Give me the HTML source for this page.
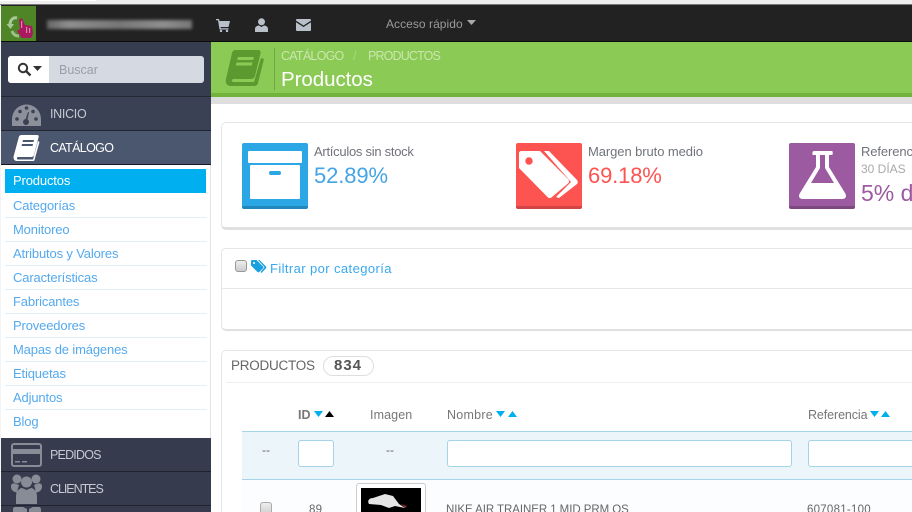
<!DOCTYPE html>
<html lang="es"><head><meta charset="utf-8"><title>Productos</title>
<style>
html,body{margin:0;padding:0;width:912px;height:512px;overflow:hidden;background:#fff}
body{position:relative;font-family:"Liberation Sans",sans-serif;color:#666}
.a{position:absolute;box-sizing:border-box}
.t{position:absolute;white-space:nowrap;line-height:1}
.sub{position:absolute;left:13px;font-size:13px;letter-spacing:-.15px;color:#55a9ee;white-space:nowrap;line-height:1}
.ln{position:absolute;left:5px;width:202px;height:1px;background:#dff0f9}
.m{position:absolute;left:50px;font-size:12.500px;color:#c5c9d2;white-space:nowrap;line-height:1}
svg{position:absolute;display:block}
</style></head><body>
<!-- chrome top -->
<div class="a" style="left:0;top:0;width:912px;height:5px;background:#eeeeee"></div>
<div class="a" style="left:0;top:0;width:96px;height:1px;background:#fff"></div>
<div class="a" style="left:0;top:4px;width:912px;height:2px;background:#777"></div>
<div class="a" style="left:0;top:5px;width:912px;height:36px;background:#222"></div>
<div class="a" style="left:0;top:41px;width:912px;height:1px;background:#0b0b0b"></div>
<div class="a" style="left:0;top:5px;width:1px;height:507px;background:#f4f4f4"></div>
<!-- logo -->
<div class="a" style="left:1px;top:6px;width:35px;height:35px;background:#4f8527"></div>
<svg style="left:5px;top:12px" width="29" height="27" viewBox="0 0 29 27"><path d="M12 6C8 5 5 8 5 13" fill="none" stroke="#a9c896" stroke-width="3"/><path d="M1.500 12L5.500 17 9 12Z" fill="#a9c896"/><path d="M7 19C8 22 10 24 14 24" fill="none" stroke="#9dbf88" stroke-width="3"/><path d="M14 8L17 6 20 13 27 14 28 22 26 26H17L12 19 15 17Z" fill="#a8195e"/><path d="M16 9h1.200v7H16zM21 15h1.200v6H21zM24 16h1.200v5H24z" fill="#d884b0"/></svg>
<!-- blurred name -->
<div class="a" style="left:47px;top:20px;width:145px;height:9px;background:linear-gradient(90deg,#666,#8f8f8f 15%,#777 50%,#8f8f8f 80%,#777);filter:blur(1.500px)"></div>
<!-- top icons -->
<svg style="left:216px;top:19px" width="14" height="13" viewBox="0 0 14 13"><path d="M0 0h3l.5 2H14l-1.500 6H4.500l.3 1.200H12.500v1.300H3.500L2 1.300H0Z" fill="#b9c0c9"/><circle cx="5" cy="12" r="1.200" fill="#b9c0c9"/><circle cx="11" cy="12" r="1.200" fill="#b9c0c9"/></svg>
<svg style="left:255px;top:18px" width="13" height="14" viewBox="0 0 13 14"><circle cx="6.500" cy="3.800" r="3.500" fill="#b9c0c9"/><path d="M0 14V11C0 8.500 2.500 7.500 4 7.500L6.500 9 9 7.500C10.500 7.500 13 8.500 13 11V14Z" fill="#b9c0c9"/></svg>
<svg style="left:296px;top:19px" width="15" height="12" viewBox="0 0 15 12"><path d="M1 0h13a1 1 0 0 1 1 1v.6L7.500 6.500 0 1.600V1a1 1 0 0 1 1-1Z" fill="#b9c0c9"/><path d="M0 3.200 7.500 8 15 3.200V11a1 1 0 0 1-1 1H1a1 1 0 0 1-1-1Z" fill="#b9c0c9"/></svg>
<div class="t" style="left:386px;top:18px;font-size:12px;letter-spacing:.05px;color:#9a9a9a">Acceso rápido</div>
<svg style="left:467px;top:20px" width="9" height="5" viewBox="0 0 9 5"><path d="M0 0h9L4.500 5Z" fill="#aaa"/></svg>
<!-- sidebar -->
<div class="a" style="left:1px;top:42px;width:210px;height:55px;background:#363d4f;border-bottom:1px solid #232834"></div>
<div class="a" style="left:8px;top:56px;width:196px;height:27px;background:#d5dae2;border-radius:3px"></div>
<div class="a" style="left:8px;top:56px;width:41px;height:27px;background:#fff;border-radius:3px 0 0 3px"></div>
<svg style="left:17px;top:62px" width="15" height="15" viewBox="0 0 15 15"><circle cx="6" cy="6" r="4.200" fill="none" stroke="#333" stroke-width="2"/><path d="M9 9l4.500 4.500" stroke="#333" stroke-width="2.300"/></svg>
<svg style="left:33px;top:66px" width="9" height="5" viewBox="0 0 9 5"><path d="M0 0h9L4.500 5Z" fill="#333"/></svg>
<div class="t" style="left:59px;top:64px;font-size:12.500px;letter-spacing:0;color:#9a9ea6">Buscar</div>

<div class="a" style="left:1px;top:97px;width:210px;height:34px;background:#3a4154;border-bottom:1px solid #1f2430"></div>
<svg style="left:12px;top:104px" width="29" height="22" viewBox="0 0 29 22"><path d="M0 22V15A14.500 14.500 0 0 1 29 15V22Z" fill="#8c909a"/><g fill="#3a4154"><circle cx="5" cy="15" r="1.800"/><circle cx="8" cy="7.500" r="1.800"/><circle cx="14.500" cy="4" r="1.800"/><circle cx="21" cy="7.500" r="1.800"/><circle cx="24" cy="15" r="1.800"/><circle cx="14" cy="18" r="3"/><path d="M13 17l3-9 1 .5-2 9Z"/></g></svg>
<div class="m" style="top:108px;letter-spacing:-.3px">INICIO</div>

<div class="a" style="left:1px;top:131px;width:210px;height:34px;background:#4b566f;border-bottom:1px solid #15181f"></div>
<svg style="left:13px;top:135px" width="27" height="26" viewBox="0 0 27 26"><path d="M6 1.500C6.500 .5 7.500 0 8.500 0H24C25.500 0 26 1 25.500 2.500L21 20C20.500 21.500 19.500 22 18 22H5C3.500 22 3.500 24.500 5 24.500H20L25 6 26.500 7 21.500 25C21.300 25.700 20.800 26 20 26H4C1.500 26 0 24 .7 21Z" fill="#fff"/><path d="M10 5h11l-.5 2H9.500ZM9 9h11l-.5 2h-11Z" fill="#4b566f"/></svg>
<div class="m" style="top:142px;color:#fff;letter-spacing:-.65px">CATÁLOGO</div>

<div class="a" style="left:1px;top:165px;width:210px;height:273px;background:#fff;border-right:1px solid #e3e3e3"></div>
<div class="a" style="left:5px;top:169px;width:201px;height:24px;background:#00aff0"></div>
<div class="sub" style="top:174px;color:#fff">Productos</div>
<div class="sub" style="top:199px">Categorías</div><div class="ln" style="top:217px"></div>
<div class="sub" style="top:223px">Monitoreo</div><div class="ln" style="top:241px"></div>
<div class="sub" style="top:247px">Atributos y Valores</div><div class="ln" style="top:265px"></div>
<div class="sub" style="top:271px">Características</div><div class="ln" style="top:289px"></div>
<div class="sub" style="top:295px">Fabricantes</div><div class="ln" style="top:313px"></div>
<div class="sub" style="top:319px">Proveedores</div><div class="ln" style="top:337px"></div>
<div class="sub" style="top:343px">Mapas de imágenes</div><div class="ln" style="top:361px"></div>
<div class="sub" style="top:367px">Etiquetas</div><div class="ln" style="top:385px"></div>
<div class="sub" style="top:391px">Adjuntos</div><div class="ln" style="top:409px"></div>
<div class="sub" style="top:415px">Blog</div>

<div class="a" style="left:1px;top:438px;width:210px;height:34px;background:#363c4e;border-bottom:1px solid #1f2430"></div>
<svg style="left:11px;top:443px" width="31" height="24" viewBox="0 0 31 24"><rect x="1" y="1" width="29" height="22" rx="2" fill="none" stroke="#888c96" stroke-width="2"/><rect x="1" y="6" width="29" height="5" fill="#888c96"/><path d="M4 18h5v1.500H4zM11 18h5v1.500h-5z" fill="#888c96"/></svg>
<div class="m" style="top:449px;letter-spacing:-.8px">PEDIDOS</div>

<div class="a" style="left:1px;top:472px;width:210px;height:34px;background:#363c4e;border-bottom:1px solid #1f2430"></div>
<svg style="left:11px;top:474px" width="31" height="30" viewBox="0 0 31 30"><g fill="#888c96"><circle cx="6" cy="5" r="4.500"/><circle cx="25" cy="5" r="4.500"/><circle cx="15.500" cy="8" r="5.500"/><path d="M0 12C0 10 2 9 4 9.500L8 11C7 14 6 17 7 19L4 18C1 17 0 15 0 12ZM31 12C31 10 29 9 27 9.500L23 11C24 14 25 17 24 19L27 18C30 17 31 15 31 12Z"/><path d="M5 30V22C5 17 9 14 11 14L15.500 16 20 14C22 14 26 17 26 22V30Z"/></g></svg>
<div class="m" style="top:483px;letter-spacing:-1.050px">CLIENTES</div>
<div class="a" style="left:1px;top:506px;width:210px;height:6px;background:#363c4e"></div>
<svg style="left:13px;top:507px" width="28" height="5" viewBox="0 0 28 5"><path d="M0 5V2C0 1 1 0 2 0H10L14 2V5ZM16 5V2L20 0H26C27 0 28 1 28 2V5Z" fill="#888c96"/></svg>

<!-- green header -->
<div class="a" style="left:211px;top:42px;width:701px;height:52px;background:#8bca55"></div>
<div class="a" style="left:211px;top:93px;width:701px;height:4px;background:#72b33c"></div>
<div class="a" style="left:211px;top:97px;width:701px;height:7px;background:#dedede"></div>
<svg style="left:225px;top:50px" width="40" height="36" viewBox="0 0 40 36"><path d="M7 3C7.500 1 9 0 11 0H33C35 0 36 1.500 35.500 3.500L30 26C29.500 27.500 28 29 26 29H9C6 29 6 32 9 32H29L36 8 39 9 33 33C32.500 35 31 36 29 36H6C2 36 0 33 1 29Z" fill="#5c9a2f"/><path d="M13 7H29L28 10H12ZM11.500 12.500H27.500L26.700 15.500H10.700Z" fill="#8bca55"/></svg>
<div class="a" style="left:274px;top:48px;width:1px;height:42px;background:#6fa743"></div>
<div class="t" style="left:281px;top:50px;font-size:12.500px;letter-spacing:-.75px;color:#cbe6ae">CATÁLOGO</div>
<div class="t" style="left:353px;top:50px;font-size:12.500px;color:#a9d77f">/</div>
<div class="t" style="left:368px;top:50px;font-size:12.500px;letter-spacing:-.85px;color:#cbe6ae">PRODUCTOS</div>
<div class="t" style="left:281px;top:70px;font-size:20.500px;letter-spacing:-.05px;color:#fff">Productos</div>

<!-- KPI panel -->
<div class="a" style="left:221px;top:122px;width:720px;height:108px;background:#fff;border:1px solid #e6e6e6;border-bottom:3px solid #e0e0e0;border-radius:5px"></div>
<div class="a" style="left:242px;top:143px;width:66px;height:66px;background:#2aa7e4;border-bottom:3px solid #2088bb;border-radius:2px"></div>
<div class="a" style="left:248px;top:151px;width:54px;height:12px;background:#fff;border-radius:1px"></div>
<div class="a" style="left:250px;top:165px;width:50px;height:34px;background:#fff;border-radius:1px"></div>
<div class="a" style="left:269px;top:171px;width:12px;height:4px;background:#2aa7e4;border-radius:2px"></div>
<div class="t" style="left:314px;top:145px;font-size:13px;letter-spacing:-.27px;color:#707479">Artículos sin stock</div>
<div class="t" style="left:314px;top:165px;font-size:22px;letter-spacing:-.1px;color:#44a4e5">52.89%</div>

<div class="a" style="left:516px;top:143px;width:66px;height:66px;background:#fd5351;border-bottom:3px solid #d44444;border-radius:2px"></div>
<svg style="left:516px;top:143px" width="66" height="63" viewBox="0 0 66 63"><path d="M5 8H24L52 36C53.500 37.500 53.500 39 52 40.500L36 54C34.500 55.500 33 55.500 31.500 54L3 25V10C3 9 4 8 5 8Z" fill="#fff"/><path d="M28 8H33L61 37C62 38.500 62 40 61 41L43 55 40 54 55 39Z" fill="#fff"/><circle cx="13" cy="18" r="3.700" fill="#fd5351"/></svg>
<div class="t" style="left:588px;top:145px;font-size:13px;letter-spacing:-.08px;color:#707479">Margen bruto medio</div>
<div class="t" style="left:588px;top:165px;font-size:22px;letter-spacing:-.15px;color:#fd5351">69.18%</div>

<div class="a" style="left:789px;top:143px;width:66px;height:66px;background:#9c5aa0;border-bottom:3px solid #7d4780;border-radius:2px"></div>
<svg style="left:789px;top:143px" width="66" height="63" viewBox="0 0 66 63"><path d="M25 8H43C44 8 44 12 43 12H40V24L56 50C58 53 57 56 53 56H14C10 56 9 53 11 50L27 24V12H24C23 12 23 8 25 8Z" fill="#fff"/><path d="M31 12H36V25L45 40H22L31 25Z" fill="#9c5aa0"/></svg>
<div class="t" style="left:861px;top:145px;font-size:13px;letter-spacing:-.1px;color:#707479">Referencias</div>
<div class="t" style="left:861px;top:163px;font-size:12px;letter-spacing:0;color:#a9a9a9">30 DÍAS</div>
<div class="t" style="left:861px;top:182px;font-size:23px;color:#9c5aa0">5% de</div>

<!-- filter panel -->
<div class="a" style="left:221px;top:248px;width:720px;height:83px;background:#fff;border:1px solid #e6e6e6;border-bottom:2px solid #e0e0e0;border-radius:5px"></div>
<div class="a" style="left:222px;top:288px;width:700px;height:1px;background:#e6e6e6"></div>
<div class="a" style="left:235px;top:260px;width:12px;height:12px;background:linear-gradient(#eee,#ccc);border:1px solid #999;border-radius:3px"></div>
<svg style="left:251px;top:260px" width="16" height="14" viewBox="0 0 16 14"><path d="M0 1.200C0 .5 .5 0 1.200 0H5.500L12 6.500C12.500 7 12.500 7.700 12 8.200L8.200 12C7.700 12.500 7 12.500 6.500 12L0 5.500Z" fill="#1a9fe0"/><path d="M7 0H8.500L15 6.500C15.500 7 15.500 7.700 15 8.200L10.500 13 9.500 12 13.500 7.300Z" fill="#1a9fe0"/><circle cx="3" cy="3" r="1" fill="#fff"/></svg>
<div class="t" style="left:270px;top:262px;font-size:13px;letter-spacing:.4px;color:#37a9ef">Filtrar por categoría</div>

<!-- products panel -->
<div class="a" style="left:221px;top:350px;width:720px;height:180px;background:#fff;border:1px solid #e6e6e6;border-radius:5px"></div>
<div class="a" style="left:226px;top:382px;width:686px;height:1px;background:#eeeeee"></div>
<div class="t" style="left:231px;top:359px;font-size:13.500px;letter-spacing:-.25px;color:#666">PRODUCTOS</div>
<div class="a" style="left:323px;top:356px;width:51px;height:20px;border:1px solid #dedede;border-radius:10px"></div>
<div class="t" style="left:334px;top:358px;font-size:15px;font-weight:bold;letter-spacing:1px;color:#555">834</div>

<div class="t" style="left:298px;top:409px;font-size:12.500px;font-weight:bold;color:#777">ID</div>
<svg style="left:314px;top:411px" width="20" height="6" viewBox="0 0 20 6"><path d="M0 0h9L4.500 6Z" fill="#00aff0"/><path d="M11 6h9L15.500 0Z" fill="#000"/></svg>
<div class="t" style="left:370px;top:409px;font-size:12.500px;letter-spacing:.1px;color:#777">Imagen</div>
<div class="t" style="left:447px;top:409px;font-size:12.500px;letter-spacing:.25px;color:#777">Nombre</div>
<svg style="left:496px;top:411px" width="21" height="6" viewBox="0 0 21 6"><path d="M0 0h9L4.500 6Z" fill="#00aff0"/><path d="M12 6h9L16.500 0Z" fill="#00aff0"/></svg>
<div class="t" style="left:808px;top:409px;font-size:12.500px;letter-spacing:-.1px;color:#777">Referencia</div>
<svg style="left:870px;top:411px" width="20" height="6" viewBox="0 0 20 6"><path d="M0 0h9L4.500 6Z" fill="#00aff0"/><path d="M11 6h9L15.500 0Z" fill="#00aff0"/></svg>

<div class="a" style="left:242px;top:431px;width:670px;height:49px;background:#ecf5fa;border-top:1px solid #a5d3e8;border-bottom:1px solid #a5d3e8"></div>
<div class="t" style="left:262px;top:444px;font-size:12px;color:#666">--</div>
<div class="t" style="left:386px;top:444px;font-size:12px;color:#666">--</div>
<div class="a" style="left:298px;top:440px;width:36px;height:27px;background:#fff;border:1px solid #a5d3e8;border-radius:3px"></div>
<div class="a" style="left:447px;top:440px;width:345px;height:27px;background:#fff;border:1px solid #a5d3e8;border-radius:3px"></div>
<div class="a" style="left:808px;top:440px;width:110px;height:27px;background:#fff;border:1px solid #a5d3e8;border-radius:3px"></div>

<div class="a" style="left:242px;top:480px;width:670px;height:32px;background:#fbfdfe"></div>
<div class="a" style="left:260px;top:502px;width:12px;height:14px;background:linear-gradient(#eee,#ccc);border:1px solid #aaa;border-radius:3px"></div>
<div class="t" style="left:309px;top:505px;font-size:11.500px;letter-spacing:.2px;color:#666">89</div>
<div class="a" style="left:356px;top:483px;width:70px;height:40px;background:#fff;border:1px solid #ccc;border-radius:3px"></div>
<div class="a" style="left:361px;top:488px;width:60px;height:30px;background:#000"></div>
<svg style="left:361px;top:488px" width="60" height="24" viewBox="0 0 60 24"><path d="M8 16C6 13 8 10 12 10L24 6 32 8 38 16 44 20 34 18 28 20 20 17Z" fill="#e6e6e6"/><path d="M40 16l6 2-2 2Z" fill="#8c2a2a"/></svg>
<div class="t" style="left:446px;top:505px;font-size:11.500px;letter-spacing:-.06px;color:#666">NIKE AIR TRAINER 1 MID PRM QS</div>
<div class="t" style="left:807px;top:505px;font-size:11.500px;letter-spacing:.25px;color:#666">607081-100</div>
</body></html>
